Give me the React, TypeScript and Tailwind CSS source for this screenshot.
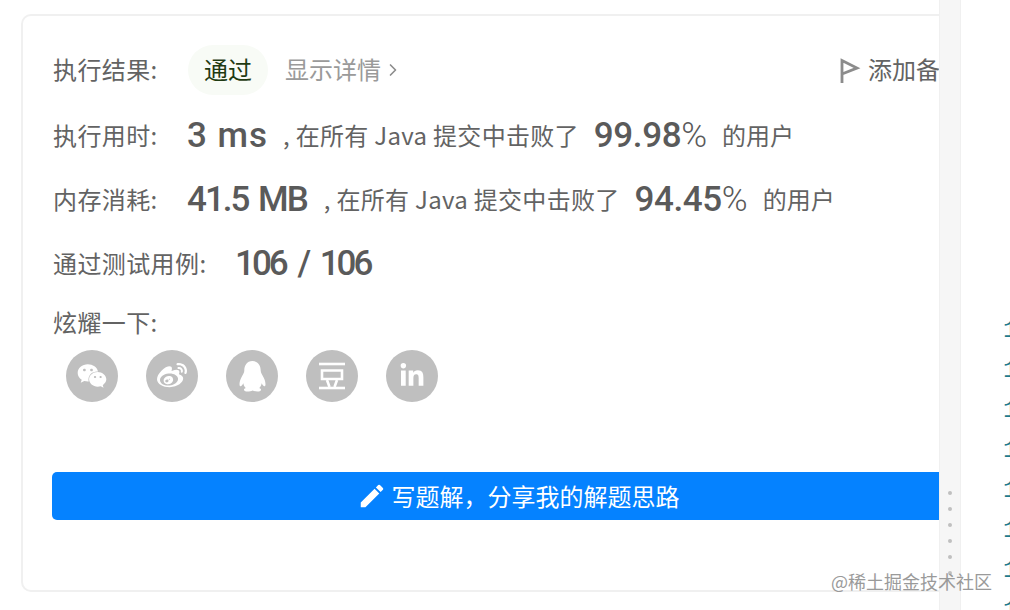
import { ChevronRight } from "lucide-react";
import { FaLinkedinIn, FaWeibo, FaWeixin } from "react-icons/fa";
import { MdEdit } from "react-icons/md";

const cjk = "font-['Noto_Sans_CJK_SC','Noto_Sans',sans-serif]";
const num = "pt-[1px] font-['Roboto','Noto_Sans_CJK_SC',sans-serif] font-medium text-[35px] text-[#5a5a5a]";

function DoubanIcon() {
  return (
    <svg viewBox="0 0 32 32" className="h-[32px] w-[32px]" fill="none" stroke="white" strokeWidth="2.6">
      <path d="M3 4h26" />
      <path d="M6 10.500h20v8.500H6z" />
      <path d="M11 20l2.500 7M21 20l-2.500 7" />
      <path d="M3 28h26" />
    </svg>
  );
}

function QqIcon() {
  return (
    <svg viewBox="0 0 30 32" className="h-[31px] w-[29px]" fill="white">
      <path d="M15 0C9 0 6.500 5 6.500 10C6.500 12 5 14 3.500 17C1.500 21 1 25 2.200 26C3 26.500 4.500 25 5.500 23C6 25.500 7 27 8 28C6 28.800 5.500 30 7 31C9 32 13 31.500 15 30.500C17 31.500 21 32 23 31C24.500 30 24 28.800 22 28C23 27 24 25.500 24.500 23C25.500 25 27 26.500 27.800 26C29 25 28.500 21 26.500 17C25 14 23.500 12 23.500 10C23.500 5 21 0 15 0Z" />
    </svg>
  );
}

function Social({ children }: { children: React.ReactNode }) {
  return (
    <div className="flex h-[52px] w-[52px] items-center justify-center rounded-full bg-[#bfbfbf] text-white">
      {children}
    </div>
  );
}

function Stat({ label, value, percent, height, spacing }: { label: string; value: string; percent: string; height: string; spacing: string }) {
  return (
    <div className={`flex items-center ${height}`}>
      <span className="w-[135px] pb-[3px] pl-px tracking-[0.4px]">{label}</span>
      <span className={`${num} ${spacing}`}>{value}</span>
      <span className="ml-[15px] pb-[3px] tracking-[0.3px]">, 在所有 Java 提交中击败了</span>
      <span className={`${num} ml-[15px] tracking-[-0.4px]`}>
        {percent}
        <span className="font-light tracking-normal">%</span>
      </span>
      <span className="ml-[15px] pb-[3px]">的用户</span>
    </div>
  );
}

export default function App() {
  return (
    <div className={`relative flex h-[610px] w-[1010px] overflow-hidden bg-white text-[24px] text-[#636363] ${cjk}`}>
      <div className="w-[939px] shrink-0 overflow-hidden pl-[21px] pt-[14px]">
        <div className="h-[578px] w-[1000px] rounded-[10px] border-2 border-[#f0f0f0] pl-[29px] pr-[29px] pt-[21px]">
          <div className="flex h-[66px] items-center">
            <span className="w-[136px] pb-[3px] pl-px tracking-[0.4px]">执行结果:</span>
            <span className="flex h-[50px] w-[80px] items-center justify-center rounded-full bg-[#f8fbf6] pb-[2px] text-[#1f3a12]">
              通过
            </span>
            <span className="ml-[17px] pb-[3px] text-[#9a9a9a]">显示详情</span>
            <ChevronRight className="ml-[2px] h-[20px] w-[20px] text-[#8c8c8c]" strokeWidth={2} />
            <div className="ml-auto mr-[26px] flex items-center">
              <svg viewBox="0 0 24 24" className="mr-[4px] h-[26px] w-[24px]" fill="none" stroke="#8c8c8c" strokeWidth="2.800">
                <path d="M2 25V2.500L17 10 2 16" />
              </svg>
              <span className="pb-[3px]">添加备注</span>
            </div>
          </div>
          <Stat label="执行用时:" value="3 ms" percent="99.98" height="h-[66px]" spacing="tracking-[1px]" />
          <Stat label="内存消耗:" value="41.5 MB" percent="94.45" height="h-[62px]" spacing="pr-[2px] tracking-[-2px] [word-spacing:3px]" />
          <div className="flex h-[66px] items-center">
            <span className="w-[183px] pb-[3px] pl-px tracking-[0.4px]">通过测试用例:</span>
            <span className={`${num} tracking-[-3px] [word-spacing:6px]`}>106 / 106</span>
          </div>
          <div className="flex h-[53px] items-center pb-[3px] pl-px tracking-[0.4px]">炫耀一下:</div>
          <div className="ml-[14px] flex gap-[28px]">
            <Social><FaWeixin className="h-[30px] w-[30px]" /></Social>
            <Social><FaWeibo className="h-[30px] w-[30px]" /></Social>
            <Social><QqIcon /></Social>
            <Social><DoubanIcon /></Social>
            <Social><FaLinkedinIn className="h-[26px] w-[26px]" /></Social>
          </div>
          <div className="mt-[70px] flex h-[48px] items-center justify-center gap-[5px] rounded-[5px] bg-[#0582ff] pr-[6px] text-white">
            <MdEdit className="h-[30px] w-[30px]" />
            <span>{"写题解\uFF0C分享我的解题思路"}</span>
          </div>
        </div>
      </div>

      <div className="flex w-[22px] shrink-0 flex-col items-center gap-[12px] border-x border-[#f0f0f0] bg-[#f6f6f6] pt-[491px]">
        {[0, 1, 2, 3, 4, 5].map((i) => (
          <div key={i} className="h-[4px] w-[4px] rounded-full bg-[#c0c0c0]" />
        ))}
      </div>

      <div className="flex flex-col pl-[42px] pt-[311px] font-['Liberation_Mono',monospace] text-[24px] leading-[40px] text-[#1f7a8c]">
        {[0, 1, 2, 3, 4, 5, 6, 7].map((i) => (
          <div key={i}>1</div>
        ))}
      </div>

      <div className="absolute bottom-[17px] right-[18px] text-[18px] leading-[24px] text-[#9a9a9a]">
        @稀土掘金技术社区
      </div>
    </div>
  );
}
